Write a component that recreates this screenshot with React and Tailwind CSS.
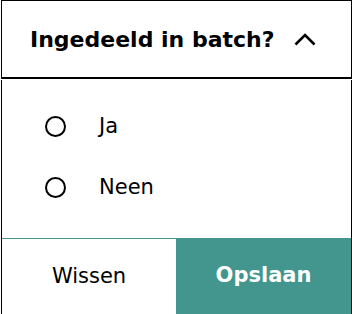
const options = ['Ja', 'Neen']

const Radio = ({ label }) => (
  <label className="flex items-center h-[61px] pl-[43px] cursor-pointer">
    <span className="w-[21px] h-[21px] rounded-full border-[2.5px] border-black shrink-0" />
    <span className="ml-[33px] text-[21px] text-black">{label}</span>
  </label>
)

const App = () => {
  return (
    <div
      className="w-[352px] h-[314px] flex flex-col bg-white pl-px"
      style={{ fontFamily: '"DejaVu Sans", sans-serif' }}
    >
      <div className="h-[79px] shrink-0 flex items-center justify-between border-t border-x border-b-2 border-black pl-[28px] pr-[35px]">
        <span className="text-[22px] font-bold text-black">
          Ingedeeld in batch?
        </span>
        <svg width="22" height="13" viewBox="0 0 22 13" fill="none">
          <path d="M1.5 11.5 L11 2 L20.5 11.5" stroke="black" strokeWidth="2.6" />
        </svg>
      </div>
      <div className="flex-1 mt-px border-x border-black flex flex-col pt-[16px]">
        {options.map(option => (
          <Radio key={option} label={option} />
        ))}
      </div>
      <div className="h-[76px] shrink-0 flex border-l border-r border-black">
        <button className="w-[174px] border-t border-[#42968e] text-[21px] text-black">
          Wissen
        </button>
        <button className="flex-1 bg-[#42968e] text-[21px] font-bold text-white">
          Opslaan
        </button>
      </div>
    </div>
  )
}

export default App
